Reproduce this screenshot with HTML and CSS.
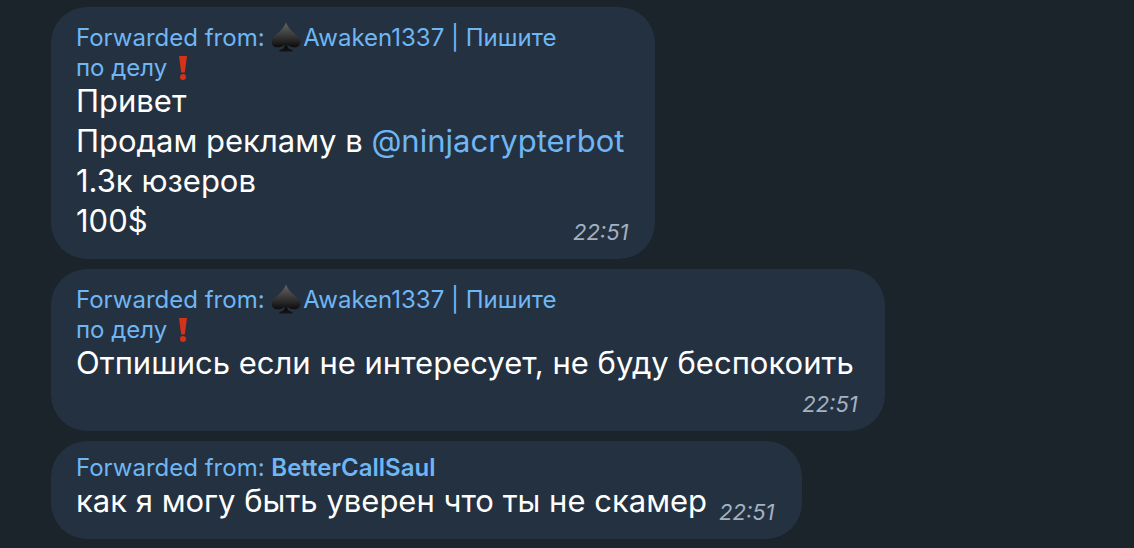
FILE: index.html
```html
<!DOCTYPE html>
<html lang="ru">
  <head>
    <meta charset="utf-8">
    <meta name="viewport" content="width=device-width, initial-scale=1">
    <title>Chat</title>
    <link rel="stylesheet" href="styles.css">
  </head>
  <body>
    <svg class="defs" aria-hidden="true">
      <defs>
        <linearGradient id="spade-fill" x1="0" y1="0" x2="0" y2="1">
          <stop offset="0" stop-color="#666"/>
          <stop offset=".5" stop-color="#333"/>
          <stop offset=".85" stop-color="#0c0c0c"/>
          <stop offset="1" stop-color="#141414"/>
        </linearGradient>
        <symbol id="spade" viewBox="0 0 30 30">
          <path fill="url(#spade-fill)" d="M15 .5C16.500 4.500 19 7.500 23 11c4 3.500 6.300 5.800 6.300 9 0 3.300-2.500 5.300-5.800 5.300-2.800 0-5.300-1-7.200-2.600.2 2.800 1.200 4.300 3.700 4.800 1.200.2 1.700.6 1.700 1.200 0 .5-.3.800-1 .8H9.300c-.7 0-1-.3-1-.8 0-.6.5-1 1.700-1.200 2.500-.5 3.500-2 3.700-4.800-1.900 1.600-4.400 2.600-7.200 2.600C3.200 25.300.7 23.300.7 20c0-3.200 2.300-5.500 6.300-9 4-3.500 6.500-6.500 8-10.500z"/>
        </symbol>
        <symbol id="mark" viewBox="0 0 10 26">
          <path fill="#d5321a" d="M1 1h8L6.800 17.500H3.200z"/>
          <circle fill="#d5321a" cx="5" cy="22" r="3"/>
        </symbol>
      </defs>
    </svg>
    <main class="chat">
      <article class="message">
        <div class="forward">Forwarded from: <svg class="spade"><use href="#spade"/></svg>Awaken1337 | Пишите<br>по делу <svg class="mark"><use href="#mark"/></svg></div>
        <div class="body">
          <p class="text">Привет<br>Продам рекламу в <a class="mention" href="#">@ninjacrypterbot</a><br>1.3к юзеров<br>100$</p>
          <time class="time">22:51</time>
        </div>
      </article>
      <article class="message">
        <div class="forward">Forwarded from: <svg class="spade"><use href="#spade"/></svg>Awaken1337 | Пишите<br>по делу <svg class="mark"><use href="#mark"/></svg></div>
        <div class="body below">
          <p class="text">Отпишись если не интересует, не буду беспокоить</p>
          <time class="time">22:51</time>
        </div>
      </article>
      <article class="message short">
        <div class="forward">Forwarded from: <b class="name">BetterCallSaul</b></div>
        <div class="body inline">
          <p class="text">как я могу быть уверен что ты не скамер</p>
          <time class="time">22:51</time>
        </div>
      </article>
    </main>
  </body>
</html>
```

FILE: styles.css
```css
body {
  margin: 0;
  background: #1b232b;
  color: #fff;
  font-family: Inter, sans-serif;
}
.defs {
  display: block;
  width: 0;
  height: 0;
}
.chat {
  display: flex;
  flex-direction: column;
  align-items: flex-start;
  gap: 10px;
  padding: 7px 51px 9px;
}
.message {
  padding: 16px 27px 14px 25px;
  border-radius: 36px;
  background: #243140;
}
.short {
  padding-top: 12px;
}
.forward {
  color: #6fb6f5;
  font-size: 24px;
  line-height: 30px;
}
.name {
  font-weight: 600;
}
.spade {
  width: 30px;
  height: 30px;
  margin: -6px 2px 0 0;
  vertical-align: -6px;
}
.mark {
  width: 10px;
  height: 26px;
  margin: 0 4px;
  vertical-align: -5px;
}
.body {
  display: flex;
  flex-direction: column;
  margin-top: -2px;
}
.text {
  margin: 0;
  padding-right: 4px;
  font-size: 31px;
  line-height: 40px;
}
.mention {
  color: #6fb6f5;
  text-decoration: none;
}
.time {
  align-self: flex-end;
  color: #a3b1c2;
  font-size: 22px;
  font-style: italic;
  line-height: 26px;
  margin-top: -22px;
}
.below .time {
  margin-top: 8px;
}
.inline {
  flex-direction: row;
  gap: 8px;
}
.inline .time {
  align-self: flex-start;
  margin-top: 18px;
}
```
